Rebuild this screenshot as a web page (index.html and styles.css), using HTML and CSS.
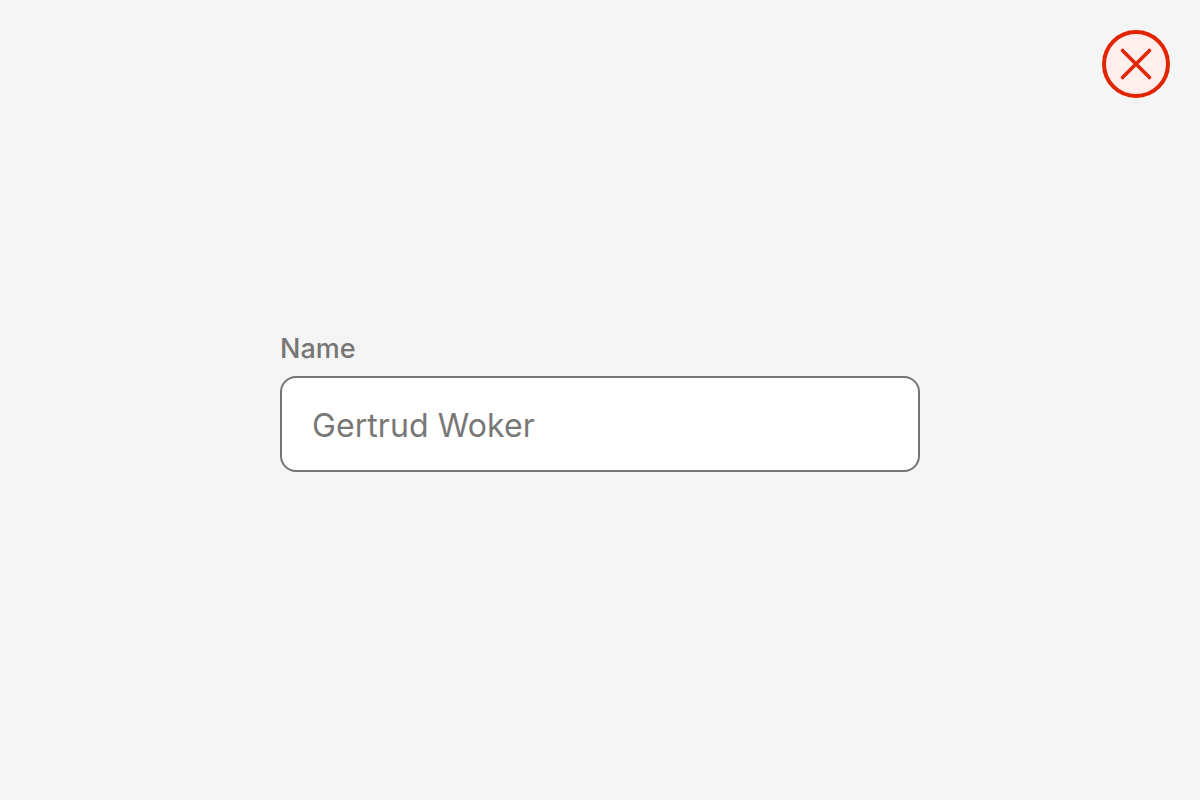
FILE: index.html
```html
<!DOCTYPE html>
<html lang="en">
<head>
<meta charset="UTF-8" />
<meta name="viewport" content="width=device-width, initial-scale=1" />
<title>Name field</title>
<link rel="stylesheet" href="styles.css">
</head>
<body>

<button class="close-btn" title="Close" aria-label="Close">
  <svg viewBox="0 0 68 68" width="68" height="68" aria-hidden="true">
    <circle cx="34" cy="34" r="32" fill="#ffeeec" stroke="#e32400" stroke-width="4" />
    <path d="M20.5 20.5 L47.5 47.5 M47.5 20.5 L20.5 47.5" fill="none" stroke="#e32400" stroke-width="3.6" stroke-linecap="round" />
  </svg>
</button>

<main>
  <form class="field">
    <label for="name">Name</label>
    <div class="input-box" id="name">Gertrud Woker</div>
  </form>
</main>

</body>
</html>
```

FILE: styles.css
```css
body {
  font-family: Inter, 'Liberation Sans', Arial, sans-serif;
  margin: 0;
  padding: 0;
  background: #f5f5f5;
  color: #767676;
  height: 800px;
  overflow: hidden;
}
.close-btn {
  position: absolute;
  top: 30px;
  right: 30px;
  width: 68px;
  height: 68px;
  padding: 0;
  border: none;
  background: none;
  cursor: pointer;
}
.close-btn svg {
  display: block;
}
main {
  height: 100%;
  display: flex;
  justify-content: center;
  padding-top: 332px;
  box-sizing: border-box;
}
.field {
  width: 640px;
  display: flex;
  flex-direction: column;
  gap: 11px;
}
.field label {
  font-size: 27px;
  line-height: 33px;
  font-weight: 550;
  color: #767676;
}
.input-box {
  height: 96px;
  box-sizing: border-box;
  display: flex;
  align-items: center;
  padding: 2px 30px 0;
  background: #fff;
  border: 2px solid #757575;
  border-radius: 16px;
  font-size: 32px;
  letter-spacing: 0.08px;
  color: #787878;
}
```
